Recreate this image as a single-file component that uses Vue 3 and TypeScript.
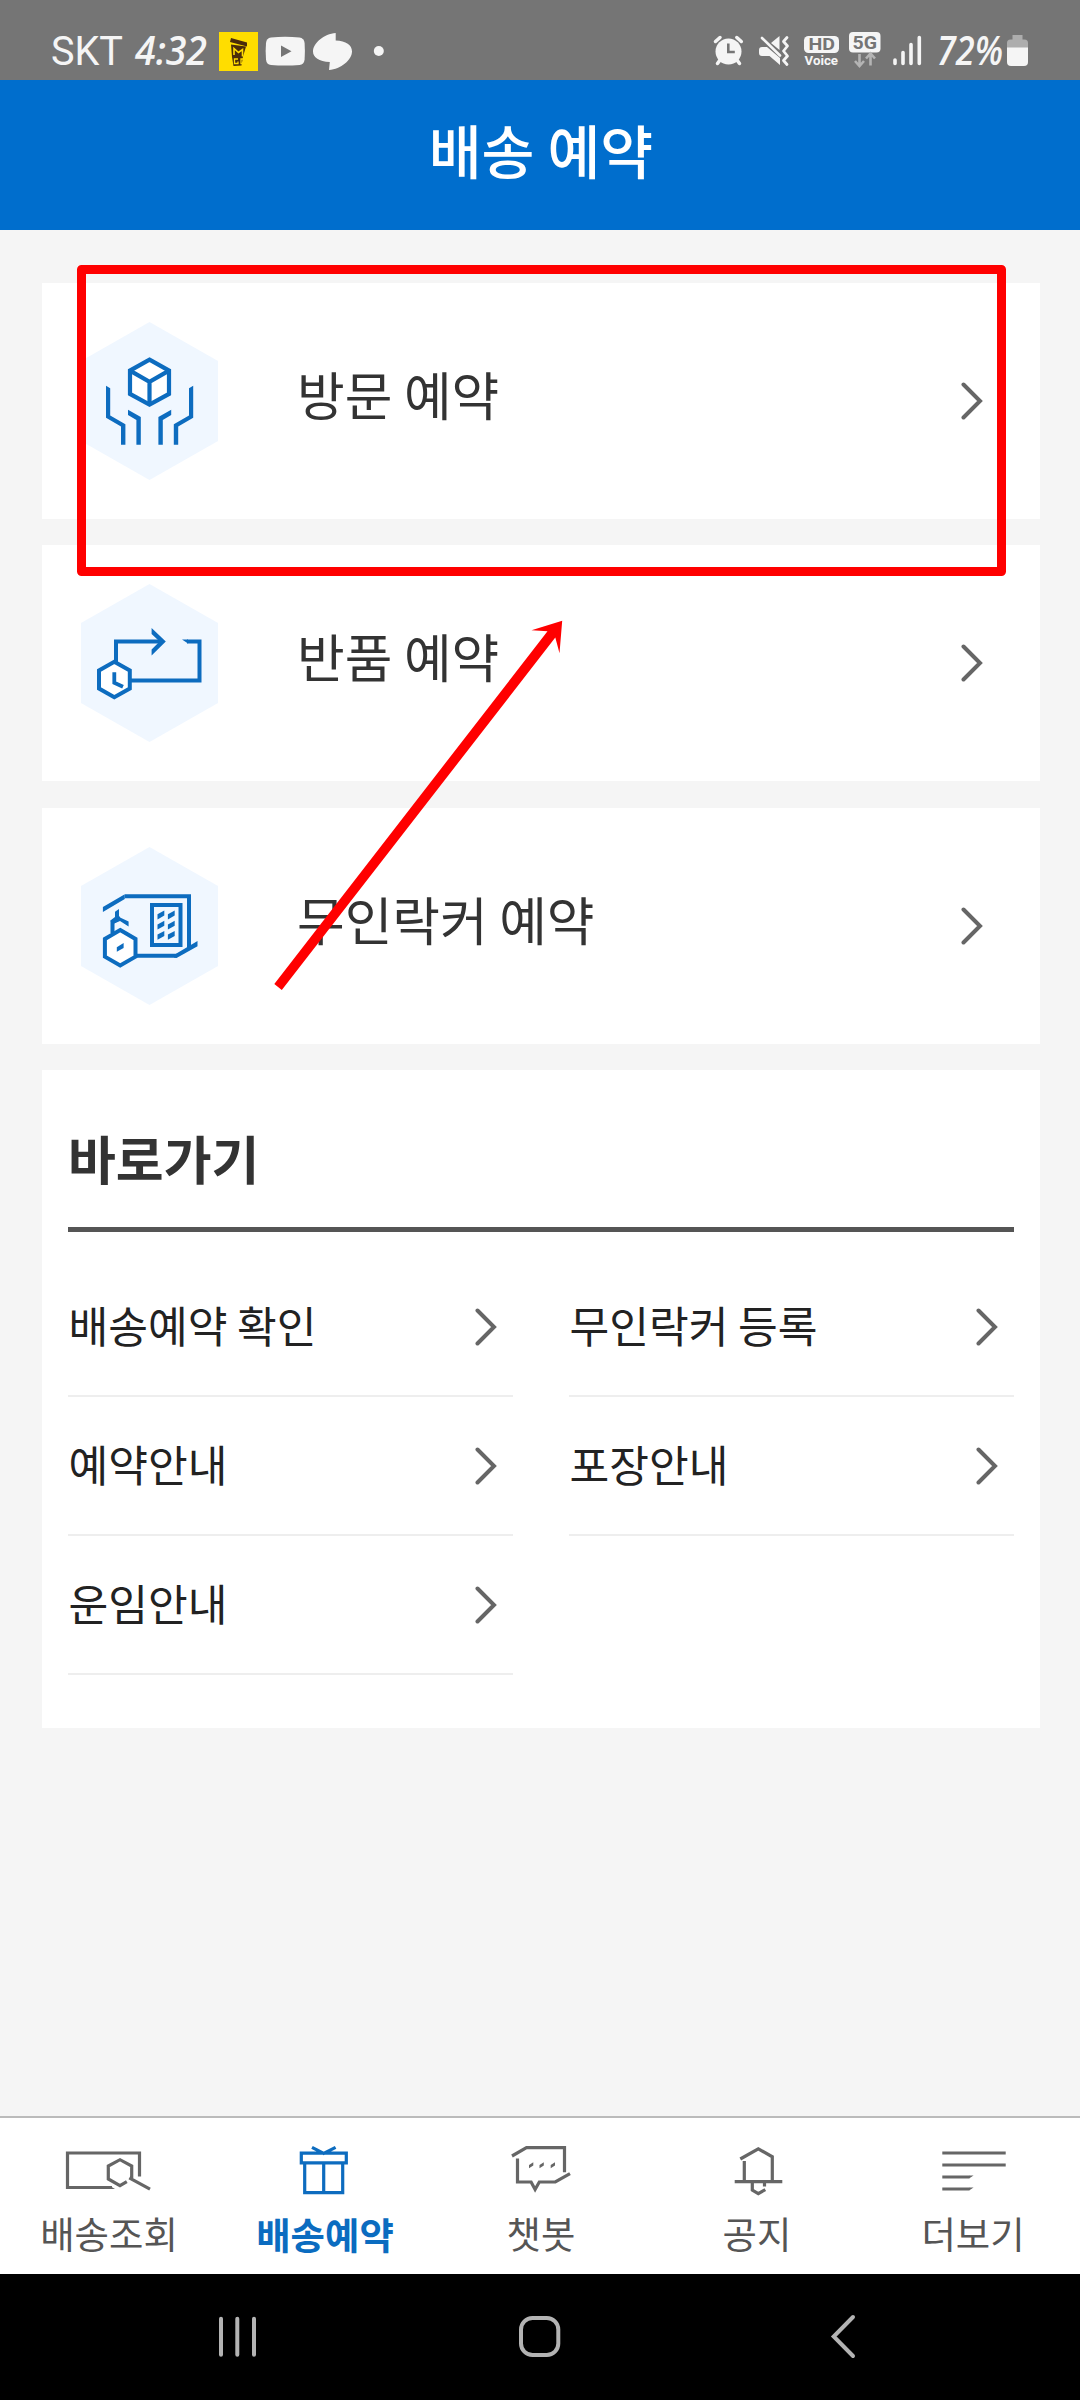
<script setup lang="ts">
import { ref } from 'vue'

interface Booking {
  id: string
  label: string
}

interface Tab {
  id: string
  label: string
}

const bookings: Booking[] = [
  { id: 'visit', label: '방문 예약' },
  { id: 'return', label: '반품 예약' },
  { id: 'locker', label: '무인락커 예약' },
]

const shortcuts: string[] = ['배송예약 확인', '무인락커 등록', '예약안내', '포장안내', '운임안내']

const tabs: Tab[] = [
  { id: 'track', label: '배송조회' },
  { id: 'book', label: '배송예약' },
  { id: 'chat', label: '챗봇' },
  { id: 'notice', label: '공지' },
  { id: 'more', label: '더보기' },
]

const activeTab = ref('book')

const keypad = [0, 1, 2].flatMap((row) => [0, 1].map((col) => ({ x: col * 10.4, y: row * 10.2 })))
</script>

<template>
  <div class="screen">
    <div class="status">
      <div class="status-side">
        <svg width="213" height="80" viewBox="0 0 213 80">
          <text class="carrier" x="51" y="65" textLength="72" lengthAdjust="spacingAndGlyphs">SKT</text>
          <text class="clock" x="135" y="65" textLength="72" lengthAdjust="spacingAndGlyphs">4:32</text>
        </svg>
        <svg width="49" height="80" viewBox="213 0 49 80">
          <rect x="219" y="32" width="39" height="39" fill="#ffdd00" />
          <path d="M231 38l16 4.5v4l-17-4.5z" fill="#4a2c0a" />
          <path d="M231 44.5l15 2-3 10-1.5 9-8 .5-1.5-9z" fill="#4a2c0a" />
          <path d="M234 55V48.5l4.5 4 4-3V56.500" fill="none" stroke="#ffdd00" stroke-width="1.6" />
          <path d="M238 59h-3.500v4.500h3.500v-2M244 59h-3v4.500h2.500" fill="none" stroke="#ffdd00" stroke-width="1.3" />
        </svg>
        <svg width="47" height="80" viewBox="262 0 47 80">
          <path d="M271 37.500Q285 36 299.500 37.500Q304 38 304.600 43Q305.200 51 304.600 59.500Q304 64.500 299.500 65Q285 66 271 65Q266.500 64.500 266 59.500Q265.300 51 266 43Q266.500 38 271 37.500Z" fill="#f5f5f5" />
          <path d="M281 45.500V57l10.500-5.700z" fill="#757575" />
        </svg>
        <svg width="81" height="80" viewBox="309 0 81 80">
          <path d="M335.700 33v7.500C346 41 352 45 352 51.500C352 60 341 69 329 70L329.800 62C319 61.500 313 57.500 313 51.500C313 43 324 34 335.700 33Z" fill="#f5f5f5" />
          <circle cx="378.800" cy="51" r="5" fill="#f5f5f5" />
        </svg>
      </div>
      <div class="status-side">
        <svg width="43" height="80" viewBox="708 0 43 80">
          <g stroke="#f5f5f5" stroke-width="3.500" stroke-linecap="round">
            <path d="M715.500 41.500l4.500-4M741.300 41.500l-4.500-4M720 60l-2.500 3.500M737 60l2.500 3.500" />
          </g>
          <circle cx="728.500" cy="51.500" r="13" fill="#f5f5f5" />
          <path d="M728.300 43.500V52h6.500" fill="none" stroke="#757575" stroke-width="2.600" />
        </svg>
        <svg width="47" height="80" viewBox="751 0 47 80">
          <path d="M759 50q0-3 3-3h5l13 11v7l-10.500-9H762q-3 0-3-3zM779.500 36v14l-8.500-7z" fill="#f5f5f5" />
          <path d="M762 38l18 17.500" stroke="#f5f5f5" stroke-width="2.600" stroke-linecap="round" />
          <path d="M787 37.500l-3.500 4 4 4.500-4 5 4 5-4 4.500 3.500 4" fill="none" stroke="#f5f5f5" stroke-width="2.800" stroke-linecap="round" stroke-linejoin="round" />
        </svg>
        <svg width="46" height="80" viewBox="798 0 46 80">
          <rect x="804" y="36" width="35" height="17" rx="4.500" fill="#f5f5f5" />
          <text class="hd" x="808.500" y="50" textLength="26.500" lengthAdjust="spacingAndGlyphs">HD</text>
          <text class="voice" x="804.500" y="64.500" textLength="33.500" lengthAdjust="spacingAndGlyphs">Voice</text>
        </svg>
        <svg width="42" height="80" viewBox="844 0 42 80">
          <rect x="849" y="32" width="31.500" height="20.500" rx="4" fill="#f5f5f5" />
          <text class="five-g" x="852.500" y="49" textLength="24.500" lengthAdjust="spacingAndGlyphs">5G</text>
          <path d="M859.500 54v11.500m-4.500-4.500l4.500 5 4.500-5M870.500 65.500V54m-4.500 4.500l4.500-5 4.500 5" fill="none" stroke="#b4b4b4" stroke-width="2.600" />
        </svg>
        <svg width="44" height="80" viewBox="886 0 44 80">
          <path d="M895 60v3.500M903 52.500v11M911 44.500v19M919.300 37.500v26" stroke="#f5f5f5" stroke-width="3.600" stroke-linecap="round" />
        </svg>
        <svg width="150" height="80" viewBox="930 0 150 80">
          <text class="clock" x="937" y="65" textLength="66" lengthAdjust="spacingAndGlyphs">72%</text>
          <path d="M1007 48v-5q0-3.500 3.500-3.500h2V35h10v4.500h2q3.500 0 3.500 3.500v5z" fill="#adadad" />
          <path d="M1007 47.500h21V62q0 4-4 4h-13q-4 0-4-4z" fill="#f5f5f5" />
        </svg>
      </div>
    </div>

    <header class="header">
      <h1>배송 예약</h1>
    </header>

    <main class="content">
      <section v-for="item in bookings" :key="item.id" class="card booking">
        <svg v-if="item.id === 'visit'" class="hex" viewBox="81 322 137 158">
          <path d="M149.500 322L218 361v80l-68.500 39L81 441v-80z" fill="#f0f7ff" />
          <g fill="#fff" stroke="#0d6cbf" stroke-width="4.200">
            <path d="M149.500 359.700L169 370.600v23.300l-19.500 10.700L130 393.900v-23.300z" />
            <path d="M130 370.600l19.500 11.200 19.500-11.200M149.500 381.800v22.800" fill="none" />
          </g>
          <g fill="#0d6cbf">
            <path d="M106 385.700l4.200 2.500v27.300l15.200 8.700v20.500H121v-18.200l-15-8.700zM128 409.700l12.800 7.400v27.600h-4.400V420l-8.400-5z" />
            <path transform="translate(299.200 0) scale(-1 1)" d="M106 385.700l4.200 2.500v27.300l15.200 8.700v20.500H121v-18.200l-15-8.700zM128 409.700l12.800 7.400v27.600h-4.400V420l-8.400-5z" />
          </g>
        </svg>
        <svg v-else-if="item.id === 'return'" class="hex" viewBox="81 584.500 137 158">
          <path d="M149.500 584.500L218 623.500v80l-68.500 39L81 703.500v-80z" fill="#f0f7ff" />
          <path d="M116 663v-21h46M187 642h12.500v39H131" fill="none" stroke="#0d6cbf" stroke-width="4" />
          <path d="M151.600 628.500l14.200 13.500-14.200 14v-6l8-8-8-7.500zM182 640h6v4z" fill="#0d6cbf" />
          <path d="M114.300 662.300L129.800 671v18l-15.500 8.700L99 689v-18z" fill="#fff" stroke="#0d6cbf" stroke-width="4" />
          <path d="M114.300 672.700v10.500l8.700 4" fill="none" stroke="#0d6cbf" stroke-width="3.800" />
        </svg>
        <svg v-else class="hex" viewBox="81 847 137 158">
          <path d="M149.500 847L218 886v80l-68.500 39L81 966v-80z" fill="#f0f7ff" />
          <g fill="none" stroke="#0d6cbf" stroke-width="4">
            <path d="M125 896.300h64V949M136 955.700h41" />
            <rect x="152" y="905" width="28.500" height="40" />
            <path d="M112.500 933v-11l7.700-4.300" />
          </g>
          <g fill="#0d6cbf">
            <path d="M102.900 907l21.900-12.700v4.700L102.900 912zM176 953.700l21.500-12.700v5.200l-20.500 11.500h-3zM115 911.700l4-2.700v8l9.600 4.500v5L120 921l-8 3.500-1.600-4 4.600-3.500z" />
            <path v-for="(key, i) in keypad" :key="i" :transform="`translate(${key.x} ${key.y})`" d="M157.500 914.200l6.800-3.600v5l-6.800 3.800z" />
          </g>
          <path d="M120.200 930L135.500 939v17.700l-15.300 8.700-15.300-8.700V939z" fill="#fff" stroke="#0d6cbf" stroke-width="4" />
          <path d="M116.800 947.300l6.800-4.300v5l-6.800 3.700z" fill="#0d6cbf" />
        </svg>
        <span class="booking-label">{{ item.label }}</span>
        <svg class="chevron" viewBox="0 0 22 38">
          <path d="M2.500 2.500L19 19 2.500 35.500" />
        </svg>
      </section>

      <section class="card shortcuts">
        <h2>바로가기</h2>
        <ul>
          <li v-for="label in shortcuts" :key="label">
            <span>{{ label }}</span>
            <svg class="chevron" viewBox="0 0 22 38">
              <path d="M2.500 2.500L19 19 2.500 35.500" />
            </svg>
          </li>
        </ul>
      </section>
    </main>

    <nav class="tabs">
      <button v-for="tab in tabs" :key="tab.id" class="tab" :class="{ active: tab.id === activeTab }" @click="activeTab = tab.id">
        <svg v-if="tab.id === 'track'" viewBox="63 2140 90 60">
          <path d="M139.500 2176.500V2153h-72v34.500H112M126.800 2181.700l-6.800 4-11.700-6.700v-13l11.700-6.300 11.700 6.300v12.500M129.300 2177.800l20.700 11.400" />
          <path class="solid" d="M110 2185.900l5 3.200h-5z" />
        </svg>
        <svg v-else-if="tab.id === 'book'" viewBox="279 2140 90 60">
          <path d="M301.300 2153.200h45v9.600h-45zM304.700 2163v29.600h38V2163M323.700 2163v29.600M312 2147.300l11.700 6.200 11.900-6.200" />
        </svg>
        <svg v-else-if="tab.id === 'chat'" viewBox="495 2140 90 60">
          <path d="M512 2156l14.500-8.300h38v24.500M517.500 2158.500v23.500h13.600l4 7.500 4.200-7.500H555.300l14.700-8.300" />
          <path class="solid" d="M529 2165l4.300-2.700v3.200l-4.300 2.700zM539.500 2165l4.300-2.700v3.200l-4.300 2.700zM550.700 2165l4.300-2.700v3.200l-4.300 2.700z" />
        </svg>
        <svg v-else-if="tab.id === 'notice'" viewBox="711 2140 90 60">
          <path d="M740.300 2159l18-10.200 14 8V2182M744.300 2161v21M734.700 2181.700h47.600M752.300 2182v8l6 3.600 7-4M764.500 2183v3.500" />
        </svg>
        <svg v-else viewBox="927 2140 90 60">
          <path d="M942.300 2153h63.400M942.300 2165h63.400M942.300 2177h27M942.300 2189h27" />
          <path class="solid" d="M969 2175.500h4.600l-4.600 3zM969 2187.500h4.600l-4.600 3z" />
        </svg>
        <span>{{ tab.label }}</span>
      </button>
    </nav>

    <div class="system">
      <svg viewBox="0 2274 1080 126">
        <path d="M221 2318.700v36M237.300 2318.700v36M254 2318.700v36" />
        <rect x="521" y="2318" width="37.300" height="37" rx="11.500" />
        <path d="M853 2317l-19.300 19.500L853 2356" />
      </svg>
    </div>

    <!-- Highlight box and pointer drawn over the first booking card -->
    <svg class="annotation" width="1080" height="2400" viewBox="0 0 1080 2400">
      <rect x="81.500" y="269.500" width="920" height="302" stroke="#f00" stroke-width="9" stroke-linejoin="round" fill="none" />
      <path d="M274.300 984L547.500 631.200l-16-.9L562.200 620.700l-2.700 32.600-4.200-15.700L281.800 990z" fill="#f00" />
    </svg>
  </div>
</template>

<style>
body {
  margin: 0;
}
</style>

<style scoped>
.screen {
  position: relative;
  width: 1080px;
  height: 2400px;
  overflow: hidden;
  display: flex;
  flex-direction: column;
  background: #f5f5f5;
  font-family: "Noto Sans CJK KR", "Noto Sans", sans-serif;
}

.status {
  display: flex;
  justify-content: space-between;
  height: 80px;
  flex: none;
  background: #757575;
}

.status-side {
  display: flex;
}

.status-side svg {
  display: block;
}

.carrier {
  font: 400 40px Roboto, sans-serif;
  fill: #f5f5f5;
}

.clock {
  font: italic 600 40px "Open Sans", sans-serif;
  fill: #f5f5f5;
}

.hd {
  font: 700 16.500px Roboto, sans-serif;
  fill: #757575;
}

.voice {
  font: 700 13.500px Roboto, sans-serif;
  fill: #f5f5f5;
}

.five-g {
  font: 700 19px Roboto, sans-serif;
  fill: #757575;
}

.header {
  height: 150px;
  flex: none;
  box-sizing: border-box;
  padding: 0 0 12px 2px;
  display: flex;
  align-items: center;
  justify-content: center;
  background: #006ecd;
}

h1 {
  margin: 0;
  font-size: 57.500px;
  font-weight: 500;
  line-height: 80px;
  color: #fff;
}

.content {
  flex: 1;
  display: flex;
  flex-direction: column;
  gap: 26.500px;
  padding: 52.800px 40px 0 42px;
}

.card {
  background: #fff;
}

.booking {
  display: flex;
  align-items: center;
  height: 236px;
  padding: 0 57px 0 39px;
}

.hex {
  width: 137px;
  height: 158px;
}

.booking-label {
  flex: 1;
  margin-left: 79px;
  padding-bottom: 14px;
  font-size: 51.800px;
  line-height: 76px;
  color: #333;
}

.chevron {
  width: 22px;
  height: 38px;
  flex: none;
}

.chevron path {
  fill: none;
  stroke: #666;
  stroke-width: 4;
  stroke-linecap: round;
}

.shortcuts {
  height: 658px;
  box-sizing: border-box;
  padding: 0 26px;
}

h2 {
  margin: 0;
  box-sizing: border-box;
  height: 162px;
  padding-top: 50px;
  border-bottom: 5px solid #555;
  font-size: 52px;
  font-weight: 700;
  line-height: 76px;
  color: #333;
}

ul {
  list-style: none;
  margin: 26px 0 0;
  padding: 0;
  display: grid;
  grid-template-columns: 445px 445px;
  column-gap: 56px;
}

li {
  display: flex;
  align-items: center;
  justify-content: space-between;
  box-sizing: border-box;
  height: 139px;
  padding: 1px 16px 0 0;
  border-bottom: 2px solid #eee;
}

li span {
  margin-left: 0.500px;
  padding-bottom: 6px;
  font-size: 43.200px;
  line-height: 64px;
  color: #222;
}

.tabs {
  display: flex;
  flex: none;
  box-sizing: border-box;
  height: 158px;
  border-top: 2px solid #bbb;
  background: #fff;
}

.tab {
  flex: 1;
  display: flex;
  flex-direction: column;
  align-items: center;
  padding: 22px 0 0;
  border: 0;
  background: none;
  font-family: inherit;
  color: #555;
}

.tab svg {
  width: 90px;
  height: 60px;
}

.tab path {
  fill: none;
  stroke: #666;
  stroke-width: 3.200;
}

.tab path.solid {
  fill: #666;
  stroke: none;
}

.tab span {
  margin-top: 5px;
  padding-left: 2px;
  font-size: 37.400px;
  line-height: 56px;
  white-space: nowrap;
}

.tab.active {
  color: #0b6cc0;
}

.tab.active path {
  stroke: #0d6cbf;
}

.tab.active span {
  margin-top: 6px;
  font-weight: 700;
}

.system {
  height: 126px;
  flex: none;
  background: #000;
}

.system svg {
  display: block;
  width: 1080px;
  height: 126px;
  fill: none;
  stroke: #b3b3b3;
  stroke-width: 4;
  stroke-linecap: round;
}

.annotation {
  position: absolute;
  top: 0;
  left: 0;
  pointer-events: none;
}
</style>
